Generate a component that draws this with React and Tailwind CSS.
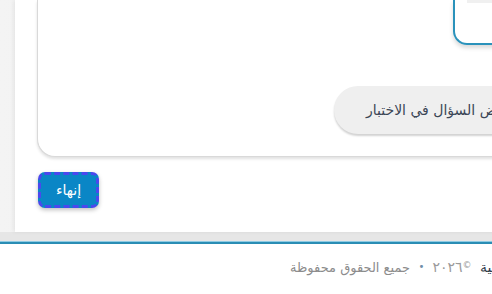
import React from "react";

export default function App() {
  const font = { fontFamily: '"DejaVu Sans", "Noto Sans", sans-serif' };
  return (
    <div className="w-[492px] h-[294px] overflow-hidden bg-white" style={font}>
      {/* main area */}
      <div className="flex bg-gradient-to-r from-[#f4f4f4] to-[#ebebeb] pl-[15px] h-[232px]">
        <div className="w-[520px] shrink-0 bg-white shadow-[-2px_0_4px_rgba(0,0,0,0.06)] flex flex-col">
          {/* card */}
          <div className="ml-[22px] w-[520px] h-[157px] shrink-0 bg-white border-l border-b border-[#d9d9d9] rounded-bl-[18px] shadow-[0_2px_3px_rgba(0,0,0,0.12)] flex flex-col">
            <div className="ml-[415px] w-[120px] h-[45px] border-l-2 border-b-2 border-[#2a92bb] rounded-bl-[14px] shadow-[0_3px_4px_rgba(0,0,0,0.15)] flex flex-col">
              <div className="ml-[12px] h-[3px] bg-[#f0f0f0]" />
            </div>
            <div className="ml-[296px] mt-[41px] w-[240px] h-[48px] rounded-full bg-[#efefef] shadow-[0_2px_2px_rgba(0,0,0,0.18)] flex items-center pl-[32px]">
              <span dir="rtl" className="text-[14px] text-[#3b4656] whitespace-nowrap leading-none">
                عرض السؤال في الاختبار
              </span>
            </div>
          </div>
          {/* button */}
          <div className="ml-[23px] mt-[15px]">
            <button className="w-[61px] h-[36px] rounded-[7px] border-[3px] border-dashed border-[#4b48ee] bg-[#0a86c6] text-white text-[14px] shadow-[0_2px_4px_rgba(0,0,0,0.25)] flex items-center justify-center leading-none">
              <span dir="rtl">إنهاء</span>
            </button>
          </div>
        </div>
      </div>
      {/* gray strip */}
      <div className="h-[9px] bg-[#e6e6e6]" />
      <div className="h-[1px] bg-[#8fcbe3]" />
      <div className="h-[2px] bg-[#2a8db4]" />
      {/* footer */}
      <div className="h-[50px] flex items-center pl-[289px] pb-[4px] whitespace-nowrap">
        <div className="w-[121px] shrink-0 flex justify-end">
          <span dir="rtl" className="text-[13px] text-[#8c8c8c] leading-none">جميع الحقوق محفوظة</span>
        </div>
        <div className="w-[23px] shrink-0 flex justify-center">
          <span className="text-[10px] text-[#6f8fa8] leading-none">•</span>
        </div>
        <div className="w-[29px] shrink-0 flex justify-center">
          <span dir="rtl" className="text-[14px] text-[#9a9a9a] leading-none">٢٠٢٦</span>
        </div>
        <div className="w-[10px] shrink-0 flex justify-center">
          <span className="text-[9px] text-[#9a9a9a] leading-none -mt-[4px]">©</span>
        </div>
        <span dir="rtl" className="ml-[8px] shrink-0 text-[14px] text-[#2f3b4a] leading-none">منصة الاختبارات الإلكترونية</span>
      </div>
    </div>
  );
}
